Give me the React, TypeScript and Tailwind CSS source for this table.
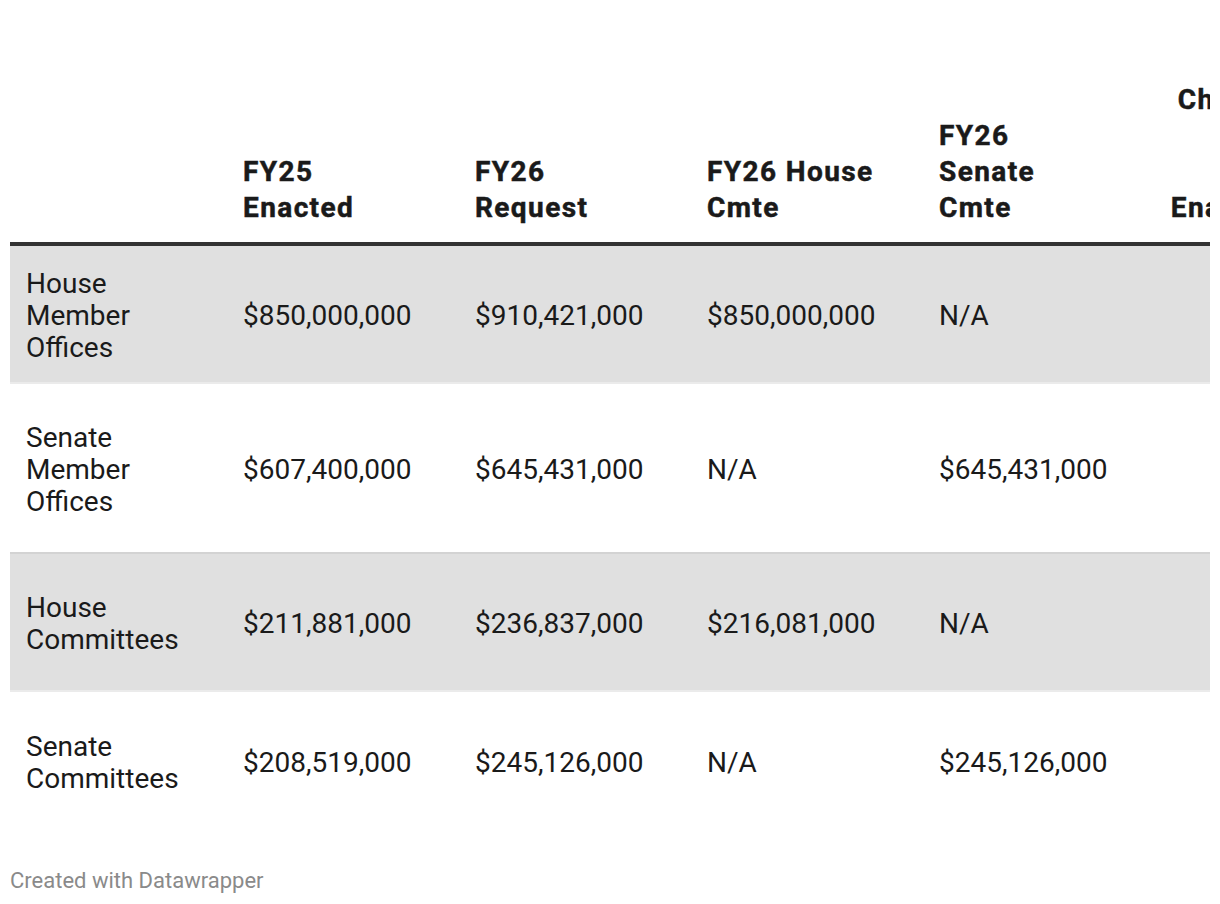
import React from "react";

const rows = [
  {
    name: ["House", "Member", "Offices"],
    vals: ["$850,000,000", "$910,421,000", "$850,000,000", "N/A"],
    cls: "bg-[#e0e0e0] h-[138px] border-b-2 border-[#ebebeb]",
  },
  {
    name: ["Senate", "Member", "Offices"],
    vals: ["$607,400,000", "$645,431,000", "N/A", "$645,431,000"],
    cls: "bg-white h-[170px] border-b-2 border-[#d3d3d3]",
  },
  {
    name: ["House", "Committees"],
    vals: ["$211,881,000", "$236,837,000", "$216,081,000", "N/A"],
    cls: "bg-[#e0e0e0] h-[138px] border-b-2 border-[#ebebeb]",
  },
  {
    name: ["Senate", "Committees"],
    vals: ["$208,519,000", "$245,126,000", "N/A", "$245,126,000"],
    cls: "bg-white h-[138px]",
  },
];

export default function App() {
  return (
    <div
      className="w-[1220px] h-[904px] bg-white overflow-hidden px-[10px] text-[#1a1a1a]"
      style={{ fontFamily: "Roboto, 'Liberation Sans', sans-serif" }}
    >
      <div className="w-[1200px] overflow-hidden pt-[82px]">
        <div className="w-[1320px]">
          {/* header */}
          <div className="flex items-end border-b-4 border-[#333333] pb-[16px] text-[28px] font-bold leading-[36px] tracking-[1.4px] [-webkit-text-stroke:0.5px_#1a1a1a]">
            <div className="w-[216px] shrink-0" />
            <div className="w-[232px] shrink-0 pl-[17px]">FY25<br />Enacted</div>
            <div className="w-[232px] shrink-0 pl-[17px]">FY26<br />Request</div>
            <div className="w-[232px] shrink-0 pl-[17px]">FY26 House<br />Cmte</div>
            <div className="w-[232px] shrink-0 pl-[17px]">FY26<br />Senate<br />Cmte</div>
            <div className="w-[144px] shrink-0 pr-[16px] text-right">
              Change<br />from<br />FY25<br />Enacted
            </div>
          </div>
          {rows.map((r, i) => (
            <div key={i} className={`flex items-center pt-[3px] text-[28px] leading-[32px] ${r.cls}`}>
              <div className="w-[216px] shrink-0 pl-[16px]">
                {r.name.map((n, j) => (
                  <div key={j}>{n}</div>
                ))}
              </div>
              {r.vals.map((v, j) => (
                <div key={j} className="w-[232px] shrink-0 pl-[17px]">
                  {v}
                </div>
              ))}
              <div className="w-[144px] shrink-0" />
            </div>
          ))}
        </div>
      </div>
      <div className="mt-[37px] text-[22px] leading-[28px] text-[#8a8a8a]">Created with Datawrapper</div>
    </div>
  );
}
